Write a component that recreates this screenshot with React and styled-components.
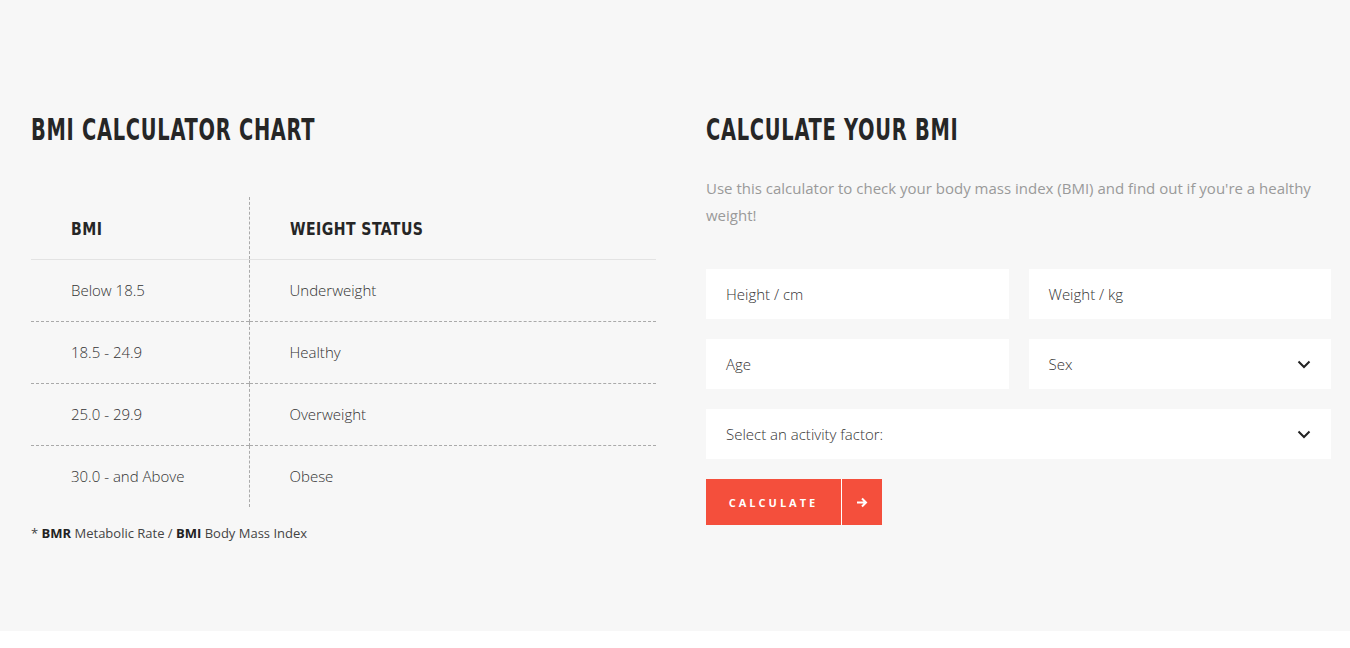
import React from "react";
import styled, { createGlobalStyle } from "styled-components";

const GlobalStyle = createGlobalStyle`
  body {
    margin: 0;
    background: #fff;
    font-family: "Open Sans", "Noto Sans", sans-serif;
    color: #333;
  }
  * { box-sizing: border-box; }
`;

const Section = styled.section`
  background: #f7f7f7;
  height: 631px;
  padding: 112px 19px 0 31px;
`;

const Columns = styled.div`
  display: grid;
  grid-template-columns: 625px 625px;
  column-gap: 50px;
`;

const Condensed = styled.span`
  display: inline-block;
  font-family: "DejaVu Sans Condensed", "DejaVu Sans", sans-serif;
  font-weight: 700;
  text-transform: uppercase;
  color: #262626;
  transform: scaleX(${(p) => p.$scale || 0.72});
  transform-origin: left center;
  white-space: nowrap;
`;

const Heading = styled.h2`
  margin: 0;
  font-size: 30px;
  line-height: 34px;
  letter-spacing: 1px;
  font-weight: 700;
`;

const Table = styled.table`
  width: 100%;
  margin-top: 50px;
  border-collapse: collapse;
`;

const Th = styled.th`
  height: 62px;
  padding: 0 0 0 40px;
  text-align: left;
  font-size: 18px;
  letter-spacing: 0.5px;
  border-bottom: 1px solid #e3e3e3;
  width: ${(p) => p.$w || "auto"};
  & + & { border-left: 1px dashed #aaa; }
`;

const Tr = styled.tr`
  & + & td { border-top: 1px dashed #aaa; }
`;

const Td = styled.td`
  height: 62px;
  padding: 0 0 0 40px;
  font-size: 15px;
  font-weight: 300;
  color: #333;
  & + & { border-left: 1px dashed #aaa; }
`;

const Note = styled.p`
  margin: 17px 0 0;
  font-size: 13px;
  font-weight: 400;
  color: #444;
  b { font-weight: 700; color: #222; }
`;

const Intro = styled.p`
  margin: 28px 0 0;
  font-size: 15px;
  line-height: 27px;
  color: #9a9a9a;
`;

const Form = styled.div`
  margin-top: 40px;
  display: grid;
  grid-template-columns: 1fr 1fr;
  gap: 20px;
`;

const Field = styled.div`
  grid-column: ${(p) => (p.$full ? "1 / -1" : "auto")};
  height: 50px;
  background: #fff;
  display: flex;
  align-items: center;
  justify-content: space-between;
  padding: 0 20px;
  font-size: 15px;
  font-weight: 300;
  color: #333;
`;

const Chevron = () => (
  <svg width="14" height="9" viewBox="0 0 14 9" fill="none">
    <path d="M1.5 1.5L7 7l5.5-5.5" stroke="#222" strokeWidth="2" />
  </svg>
);

const Button = styled.button`
  margin-top: 20px;
  display: inline-flex;
  height: 46px;
  padding: 0;
  border: 0;
  background: #f44f3c;
  color: #fff;
  cursor: pointer;
`;

const ButtonLabel = styled.span`
  width: 136px;
  display: flex;
  align-items: center;
  justify-content: center;
  font-family: "Open Sans", sans-serif;
  font-weight: 700;
  font-size: 11px;
  letter-spacing: 3px;
  border-right: 1px solid #fff;
`;

const ButtonIcon = styled.span`
  width: 40px;
  display: flex;
  align-items: center;
  justify-content: center;
`;

const rows = [
  ["Below 18.5", "Underweight"],
  ["18.5 - 24.9", "Healthy"],
  ["25.0 - 29.9", "Overweight"],
  ["30.0 - and Above", "Obese"],
];

export default function App() {
  return (
    <>
      <GlobalStyle />
      <Section>
        <Columns>
          <div>
            <Heading>
              <Condensed>BMI Calculator Chart</Condensed>
            </Heading>
            <Table>
              <thead>
                <tr>
                  <Th $w="218px">
                    <Condensed $scale={0.87}>BMI</Condensed>
                  </Th>
                  <Th>
                    <Condensed $scale={0.87}>Weight Status</Condensed>
                  </Th>
                </tr>
              </thead>
              <tbody>
                {rows.map(([bmi, status]) => (
                  <Tr key={bmi}>
                    <Td>{bmi}</Td>
                    <Td>{status}</Td>
                  </Tr>
                ))}
              </tbody>
            </Table>
            <Note>
              * <b>BMR</b> Metabolic Rate / <b>BMI</b> Body Mass Index
            </Note>
          </div>
          <div>
            <Heading>
              <Condensed>Calculate Your BMI</Condensed>
            </Heading>
            <Intro>
              Use this calculator to check your body mass index (BMI) and find out if
              you're a healthy weight!
            </Intro>
            <Form>
              <Field>Height / cm</Field>
              <Field>Weight / kg</Field>
              <Field>Age</Field>
              <Field>
                Sex
                <Chevron />
              </Field>
              <Field $full>
                Select an activity factor:
                <Chevron />
              </Field>
            </Form>
            <Button>
              <ButtonLabel>CALCULATE</ButtonLabel>
              <ButtonIcon>
                <svg width="12" height="11" viewBox="0 0 12 11" fill="none">
                  <path d="M1 5.5h9M6 1.5l4 4-4 4" stroke="#fff" strokeWidth="2" />
                </svg>
              </ButtonIcon>
            </Button>
          </div>
        </Columns>
      </Section>
    </>
  );
}
